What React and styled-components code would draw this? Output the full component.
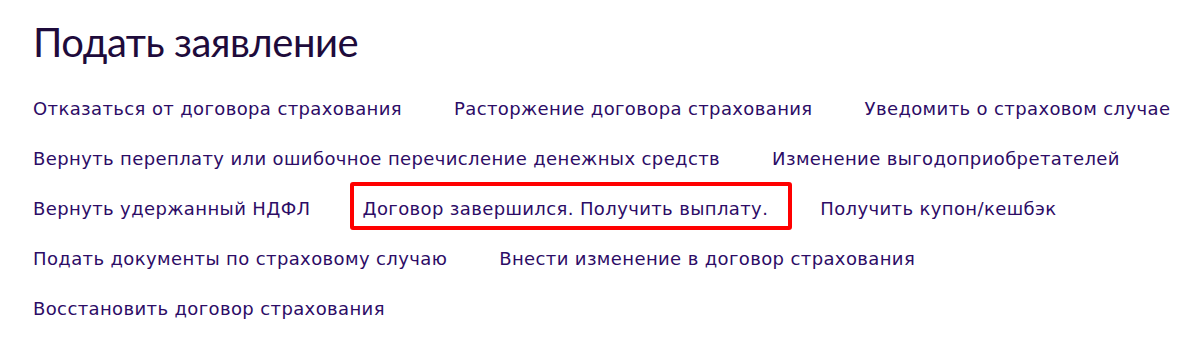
import React from "react";
import styled, { createGlobalStyle } from "styled-components";

const GlobalStyle = createGlobalStyle`
  body {
    margin: 0;
    background: #ffffff;
  }
`;

const Page = styled.div`
  width: 1178px;
  box-sizing: border-box;
  padding: 18px 0 0 33px;
`;

const Title = styled.h1`
  margin: 0 0 31px;
  font-family: "Lato", "Open Sans", sans-serif;
  font-size: 40px;
  font-weight: 400;
  line-height: 48px;
  letter-spacing: -0.5px;
  color: #1e0b3b;
`;

const LinkList = styled.div`
  display: flex;
  flex-wrap: wrap;
  column-gap: 52px;
  row-gap: 26px;
  width: 1145px;
`;

const Link = styled.a`
  position: relative;
  font-family: "DejaVu Sans", "Noto Sans", sans-serif;
  font-size: 18px;
  line-height: 24px;
  letter-spacing: 0.38px;
  color: #2d0c66;
  text-decoration: none;
  white-space: nowrap;
  cursor: pointer;

  ${({ $marked }) =>
    $marked &&
    `
    &::after {
      content: "";
      position: absolute;
      left: -12px;
      right: -24px;
      top: -15px;
      bottom: -9px;
      border: 4px solid #ff0000;
      border-radius: 3px;
      pointer-events: none;
    }
  `}
`;

const links = [
  "Отказаться от договора страхования",
  "Расторжение договора страхования",
  "Уведомить о страховом случае",
  "Вернуть переплату или ошибочное перечисление денежных средств",
  "Изменение выгодоприобретателей",
  "Вернуть удержанный НДФЛ",
  "Договор завершился. Получить выплату.",
  "Получить купон/кешбэк",
  "Подать документы по страховому случаю",
  "Внести изменение в договор страхования",
  "Восстановить договор страхования",
];

export default function App() {
  return (
    <>
      <GlobalStyle />
      <Page>
        <Title>Подать заявление</Title>
        <LinkList>
          {links.map((text) => (
            <Link key={text} $marked={text.startsWith("Договор завершился")}>
              {text}
            </Link>
          ))}
        </LinkList>
      </Page>
    </>
  );
}
